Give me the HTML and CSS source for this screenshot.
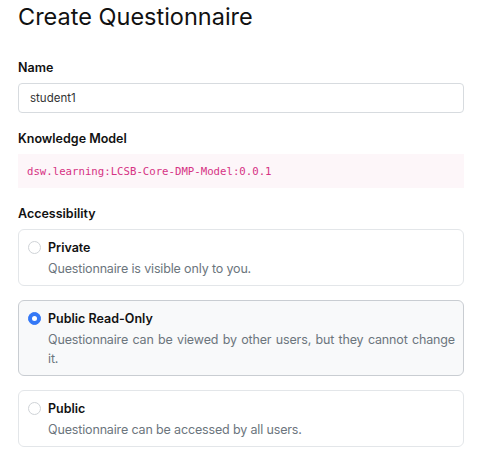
FILE: index.html
```html
<!DOCTYPE html>
<html>
<head>
<meta charset="utf-8">
<link rel="stylesheet" href="styles.css">
</head>
<body>
<div class="page">
  <h1 class="title">Create Questionnaire</h1>
  <div class="group">
    <label class="label">Name</label>
    <div class="input">student1</div>
  </div>
  <div class="group">
    <label class="label">Knowledge Model</label>
    <div class="code-box"><code>dsw.learning:LCSB-Core-DMP-Model:0.0.1</code></div>
  </div>
  <div class="group">
    <label class="label">Accessibility</label>
    <div class="options">
      <div class="option">
        <div class="option-head"><span class="radio"></span><span class="option-title">Private</span></div>
        <p class="option-desc">Questionnaire is visible only to you.</p>
      </div>
      <div class="option selected">
        <div class="option-head"><span class="radio checked"></span><span class="option-title">Public Read-Only</span></div>
        <p class="option-desc">Questionnaire can be viewed by other users, but they cannot change it.</p>
      </div>
      <div class="option">
        <div class="option-head"><span class="radio"></span><span class="option-title">Public</span></div>
        <p class="option-desc">Questionnaire can be accessed by all users.</p>
      </div>
    </div>
  </div>
</div>
</body>
</html>
```

FILE: styles.css
```css
* { box-sizing: border-box; }
body {
  margin: 0;
  background: #fff;
  font-family: Inter, "Noto Sans", sans-serif;
  color: #212529;
  font-size: 13px;
}
.page {
  padding: 0 18px;
  width: 482px;
}
.title {
  margin: 0;
  padding-top: 2px;
  font-size: 23.5px;
  font-weight: 400;
  line-height: 30px;
  color: #111;
}
.group { margin-top: 27px; }
.group + .group { margin-top: 17px; }
.label {
  display: block;
  font-weight: 600;
  font-size: 12.5px;
  line-height: 18px;
  margin-bottom: 6px;
  color: #111;
}
.input {
  height: 30px;
  border: 1px solid #d7dbdf;
  border-radius: 4px;
  padding: 0 11px;
  line-height: 28px;
  font-size: 11.5px;
  color: #333;
}
.code-box {
  background: #fdf6f9;
  height: 34px;
  padding: 0 9px;
  display: flex;
  align-items: center;
}
.code-box code {
  font-family: "DejaVu Sans Mono", monospace;
  font-size: 10.7px;
  color: #d63384;
}
.options {
  display: flex;
  flex-direction: column;
  gap: 14px;
}
.option {
  border: 1px solid #e3e6e9;
  border-radius: 6px;
  padding: 8px 8px 7px 9px;
}
.option.selected {
  background: #f8f9fa;
  border-color: #c9cdd2;
}
.option-head {
  display: flex;
  align-items: center;
  gap: 7px;
  height: 18px;
}
.radio {
  width: 13px;
  height: 13px;
  border-radius: 50%;
  border: 1px solid #cfd3d7;
  background: #fff;
  flex: none;
}
.radio.checked {
  background: #3478f6;
  border-color: #3478f6;
  position: relative;
}
.radio.checked::after {
  content: "";
  position: absolute;
  width: 5px;
  height: 5px;
  border-radius: 50%;
  background: #fff;
  left: 3px;
  top: 3px;
}
.option-title {
  font-weight: 600;
  font-size: 12.5px;
  color: #111;
}
.option-desc {
  margin: 3px 0 0 20px;
  line-height: 19px;
  color: #6c757d;
  font-size: 12.5px;
  letter-spacing: -0.15px;
  text-align: justify;
}
```
